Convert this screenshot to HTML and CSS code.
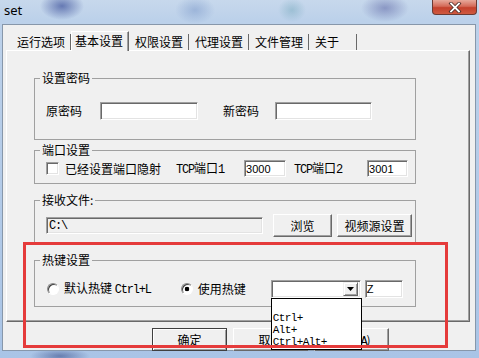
FILE: index.html
```html
<!DOCTYPE html>
<html lang="zh-CN">
<head>
    <meta charset="UTF-8">
    <meta name="viewport" content="width=device-width, initial-scale=1.0">
    <title>set</title>
    <link rel="stylesheet" href="styles.css">
</head>
<body>
    <div class="window">
        <div class="titlebar">
            <span class="title">set</span>
            <button class="close" title="关闭">
                <svg width="14" height="11" viewBox="0 0 14 11">
                    <path d="M3 1.5 L11 9.5 M11 1.5 L3 9.5" stroke="#4a2a26" stroke-width="3.4" stroke-linecap="square"/>
                    <path d="M3 1.5 L11 9.5 M11 1.5 L3 9.5" stroke="#fff" stroke-width="1.8" stroke-linecap="square"/>
                </svg>
            </button>
        </div>

        <div class="client">
            <div class="tabs">
                <div class="tab">运行选项</div>
                <div class="tab active">基本设置</div>
                <div class="tab">权限设置</div>
                <div class="tab">代理设置</div>
                <div class="tab">文件管理</div>
                <div class="tab last">关于</div>
            </div>

            <div class="panel">
                <fieldset class="group group-pw">
                    <legend>设置密码</legend>
                    <div class="row">
                        <label class="lbl-old">原密码</label>
                        <input class="field pw-old" type="text">
                        <label class="lbl-new">新密码</label>
                        <input class="field pw-new" type="text">
                    </div>
                </fieldset>

                <fieldset class="group group-port">
                    <legend>端口设置</legend>
                    <div class="row">
                        <span class="check"></span>
                        <label class="lbl-map">已经设置端口隐射</label>
                        <label class="lbl-tcp1"><span class="en">TCP</span>端口<span class="en">1</span></label>
                        <input class="field port port1" type="text" value="3000">
                        <label class="lbl-tcp2"><span class="en">TCP</span>端口<span class="en">2</span></label>
                        <input class="field port port2" type="text" value="3001">
                    </div>
                </fieldset>

                <fieldset class="group group-file">
                    <legend>接收文件:</legend>
                    <div class="row">
                        <input class="field path" type="text" value="C:\" readonly>
                        <button class="btn browse">浏览</button>
                        <button class="btn video">视频源设置</button>
                    </div>
                </fieldset>

                <fieldset class="group group-hotkey">
                    <legend>热键设置</legend>
                    <div class="row">
                        <span class="radio"></span>
                        <label class="lbl-default">默认热键 <span class="en">Ctrl+L</span></label>
                        <span class="radio checked"></span>
                        <label class="lbl-use">使用热键</label>
                        <div class="combo">
                            <span class="combo-text"></span>
                            <span class="combo-arrow">
                                <svg width="7" height="4" viewBox="0 0 7 4"><path d="M0 0 H7 L3.5 4 Z" fill="#000"/></svg>
                            </span>
                            <ul class="droplist">
                                <li>&nbsp;</li>
                                <li>Ctrl+</li>
                                <li>Alt+</li>
                                <li>Ctrl+Alt+</li>
                            </ul>
                        </div>
                        <input class="field key" type="text" value="Z">
                    </div>
                </fieldset>
            </div>

            <div class="footer">
                <button class="btn default">确定</button>
                <button class="btn">取消</button>
                <button class="btn">应用(<span class="en">A</span>)</button>
            </div>
        </div>
    </div>

    <div class="mark"></div>
</body>
</html>
```

FILE: styles.css
```css
* {
    box-sizing: border-box;
}

html, body {
    margin: 0;
}

body {
    position: relative;
    width: 479px;
    height: 358px;
    overflow: hidden;
    font-family: "Noto Sans CJK SC", sans-serif;
    font-size: 12px;
    line-height: 14px;
    color: #000;
    background:
        radial-gradient(ellipse 22px 14px at 62px 6px, rgba(70, 90, 160, 0.75), rgba(70, 90, 160, 0)),
        radial-gradient(ellipse 20px 14px at 195px 10px, rgba(120, 150, 200, 0.5), rgba(120, 150, 200, 0)),
        radial-gradient(ellipse 14px 12px at 292px 10px, rgba(120, 170, 190, 0.5), rgba(120, 170, 190, 0)),
        radial-gradient(ellipse 24px 14px at 385px 8px, rgba(100, 110, 170, 0.6), rgba(100, 110, 170, 0)),
        radial-gradient(ellipse 30px 8px at 60px 356px, rgba(60, 80, 140, 0.6), rgba(60, 80, 140, 0)),
        linear-gradient(#c7d8ec, #bcd1ea 20px, #a9c4e6);
}

.en {
    font-family: "Liberation Mono", monospace;
    font-size: 12px;
    letter-spacing: -1.2px;
}

/* title bar */

.window {
    display: flex;
    flex-direction: column;
    height: 358px;
}

.titlebar {
    display: flex;
    justify-content: space-between;
    align-items: flex-start;
    height: 24px;
}

.title {
    padding: 3px 0 0 4px;
    font-family: "Noto Sans", sans-serif;
    font-size: 13px;
    line-height: 14px;
}

.close {
    display: flex;
    align-items: center;
    justify-content: center;
    width: 45px;
    height: 15px;
    margin-right: 2px;
    padding: 0;
    border: 1px solid #6b3a33;
    border-top: 0;
    border-radius: 0 0 4px 4px;
    background: linear-gradient(#e7a99b, #d46a58 45%, #c4402c 55%, #cf5a40);
}

/* window body */

.client {
    height: 327px;
    margin: 0 3px 0 2px;
    background: #f0f0f0;
    border: 1px solid #8797aa;
}

.tabs {
    display: flex;
    align-items: flex-end;
    height: 25px;
    padding-left: 8px;
}

.tab {
    height: 16px;
    padding: 1px 5px 0 6px;
    border-right: 1px solid #696969;
    white-space: nowrap;
}

.tab.active {
    position: relative;
    z-index: 1;
    height: 20px;
    margin-bottom: -1px;
    padding: 2px 5px 0 3px;
    background: #f0f0f0;
    border-top: 1px solid #fff;
    border-left: 1px solid #fff;
    box-shadow: inset -1px 0 0 #a0a0a0;
}

.tab.last {
    padding-right: 17px;
}

.panel {
    width: 464px;
    height: 272px;
    margin-left: 3px;
    padding-left: 27px;
    border-top: 1px solid #fff;
    border-left: 1px solid #fff;
    border-right: 1px solid #696969;
    border-bottom: 1px solid #696969;
    box-shadow: inset -1px -1px 0 #a0a0a0;
}

/* group boxes */

.group {
    width: 382px;
    min-inline-size: 0;
    margin: 9px 0 0;
    padding: 0 0 0 5px;
    border: 1px solid #a0a0a0;
}

.group legend {
    padding: 0 2px;
    line-height: 14px;
}

.group .row {
    display: flex;
    align-items: center;
    padding-left: 6px;
}

.group-pw {
    margin-top: 20px;
    padding-top: 17px;
    padding-bottom: 19px;
}

.group-pw .row {
    height: 18px;
}

.group-port {
    margin-top: 3px;
    padding-top: 3px;
    padding-bottom: 6px;
}

.group-port .row {
    height: 17px;
}

.group-file {
    padding-top: 7px;
    padding-bottom: 6px;
}

.group-file .row {
    height: 23px;
}

.group-hotkey {
    padding-top: 13px;
    padding-bottom: 8px;
}

.group-hotkey .row {
    height: 18px;
}

/* controls */

.field {
    height: 18px;
    margin: 0;
    padding: 0 1px;
    font-family: "Liberation Sans", sans-serif;
    font-size: 11px;
    color: #000;
    background: #fff;
    border: 1px solid;
    border-color: #a0a0a0 #fff #fff #a0a0a0;
    box-shadow: inset 1px 1px 0 #696969, inset -1px -1px 0 #e3e3e3;
    outline: none;
}

.lbl-old {
    width: 54px;
}

.pw-old {
    width: 98px;
}

.lbl-new {
    width: 52px;
    margin-left: 25px;
}

.pw-new {
    width: 97px;
}

.check {
    width: 13px;
    height: 13px;
    margin-right: 6px;
    background: #fff;
    border: 1px solid;
    border-color: #a0a0a0 #fff #fff #a0a0a0;
    box-shadow: inset 1px 1px 0 #696969, inset -1px -1px 0 #e3e3e3;
}

.lbl-tcp1 {
    margin-left: 15px;
}

.port {
    height: 17px;
}

.port1 {
    width: 42px;
    margin-left: 20px;
}

.lbl-tcp2 {
    margin-left: 8px;
}

.port2 {
    width: 41px;
    margin-left: 25px;
}

.path {
    width: 217px;
    height: 17px;
    padding-left: 2px;
    font-family: "Liberation Mono", monospace;
    font-size: 12px;
    letter-spacing: -1.2px;
    background: #f0f0f0;
}

.btn {
    height: 23px;
    margin: 0;
    padding: 0;
    font-family: inherit;
    font-size: 12px;
    color: #000;
    background: #f0f0f0;
    border: 1px solid;
    border-color: #fff #696969 #696969 #fff;
    box-shadow: inset -1px -1px 0 #a0a0a0;
}

.btn.default {
    border-color: #404040;
    box-shadow: inset 1px 1px 0 #fff, inset -1px -1px 0 #a0a0a0;
}

.browse {
    width: 59px;
    margin-left: 10px;
}

.video {
    width: 75px;
    margin-left: 5px;
}

.radio {
    width: 12px;
    height: 12px;
    margin: 0 5px 0 1px;
    border-radius: 50%;
    border: 1px solid;
    border-color: #8a8a8a #fff #fff #8a8a8a;
    background: #fff;
    box-shadow: inset 1px 1px 0 #404040;
}

.radio.checked {
    margin-left: 30px;
    background: radial-gradient(circle, #000 0 2px, #fff 2.6px);
}

.lbl-default {
    white-space: nowrap;
}

.lbl-use {
    width: 73px;
}

.combo {
    position: relative;
    display: flex;
    align-items: center;
    justify-content: flex-end;
    width: 90px;
    height: 18px;
    padding-right: 2px;
    background: #fff;
    border: 1px solid;
    border-color: #a0a0a0 #fff #fff #a0a0a0;
    box-shadow: inset 1px 1px 0 #696969, inset -1px -1px 0 #e3e3e3;
}

.combo-arrow {
    display: flex;
    align-items: center;
    justify-content: center;
    width: 15px;
    height: 14px;
    background: #f0f0f0;
    border: 1px solid;
    border-color: #f0f0f0 #696969 #696969 #f0f0f0;
    box-shadow: inset 1px 1px 0 #fff, inset -1px -1px 0 #a0a0a0;
}

.droplist {
    position: absolute;
    top: 17px;
    left: -1px;
    z-index: 5;
    width: 91px;
    height: 52px;
    margin: 0;
    padding: 1px 0 0 1px;
    list-style: none;
    background: #fff;
    border: 1px solid #000;
    font-family: "Liberation Mono", monospace;
    font-size: 11px;
    line-height: 12px;
    letter-spacing: -0.6px;
}

.key {
    width: 38px;
    margin-left: 4px;
}

/* bottom buttons */

.footer {
    display: flex;
    gap: 6px;
    margin-top: 6px;
    padding-left: 149px;
}

.footer .btn {
    width: 75px;
}

/* red highlight drawn over the screenshot */

.mark {
    position: absolute;
    left: 23px;
    top: 242px;
    z-index: 10;
    width: 425px;
    height: 106px;
    border: 3px solid #e53b3b;
}
```
